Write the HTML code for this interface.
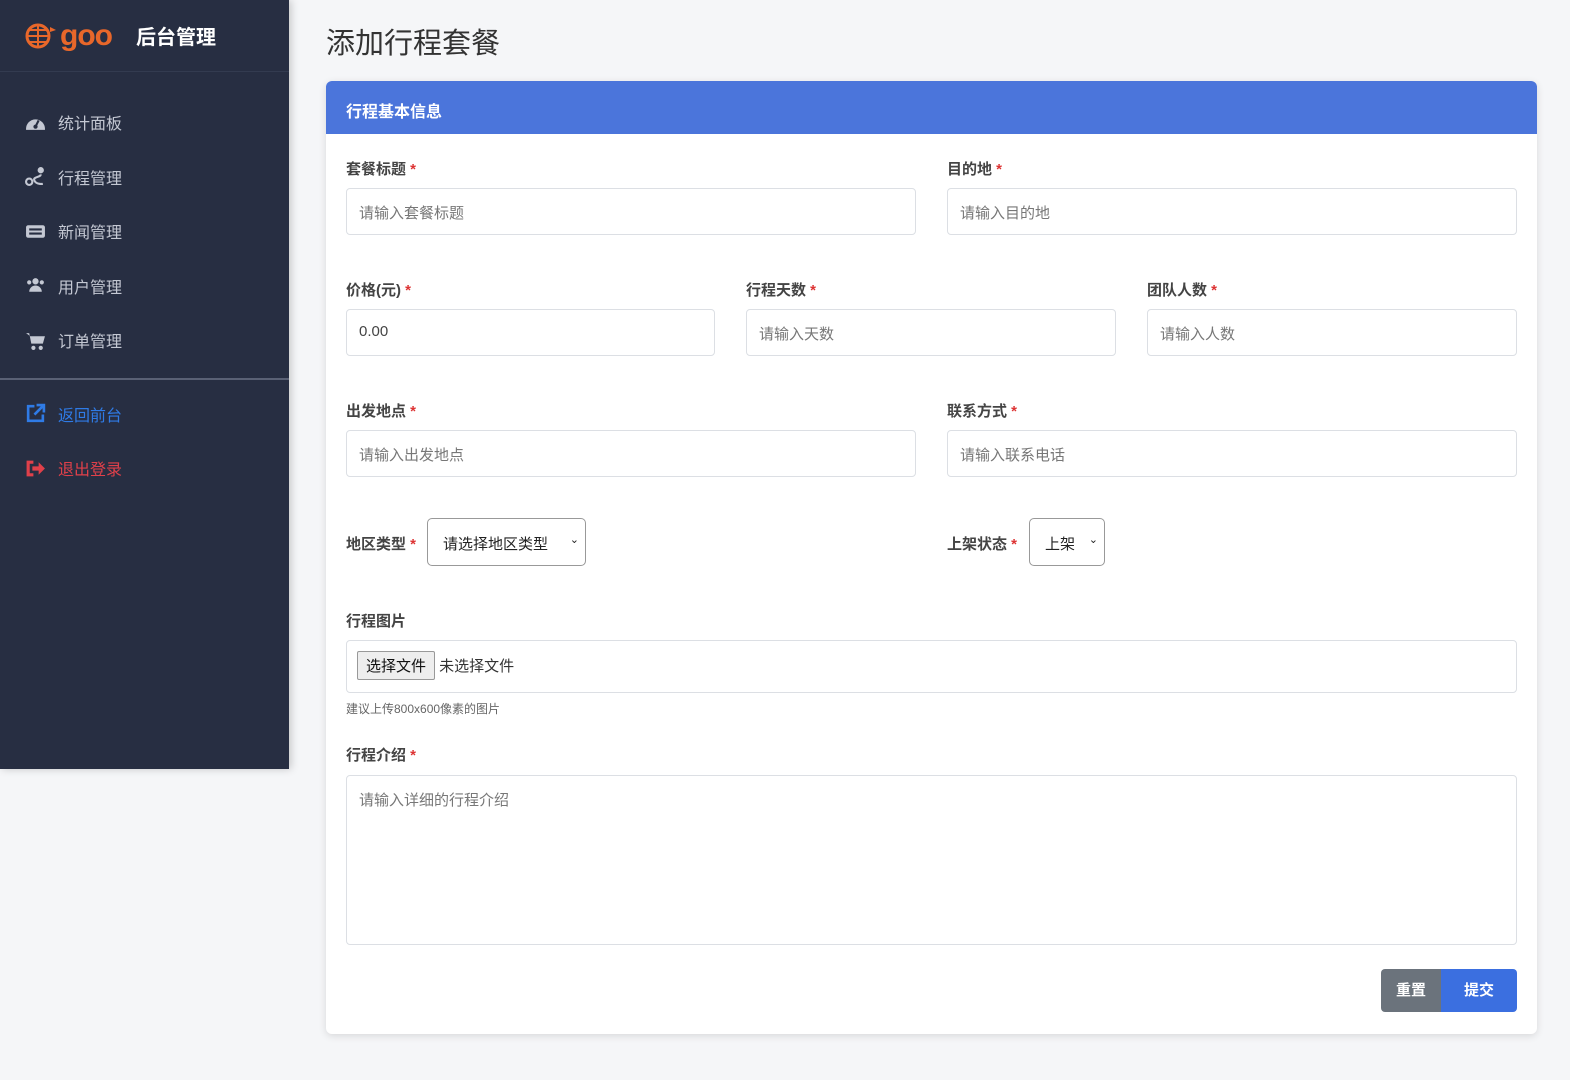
<!DOCTYPE html>
<html><head><meta charset="utf-8"><style>
*{box-sizing:border-box;margin:0;padding:0}
body{width:1570px;height:1080px;background:#f5f6f8;font-family:"Liberation Sans","Noto Sans CJK SC",sans-serif;position:relative;overflow:hidden}
.side{position:absolute;left:0;top:0;width:289px;height:769px;background:#272e42;box-shadow:2px 0 8px rgba(0,0,0,.2)}
.logo{height:72px;border-bottom:1px solid #333b50;display:flex;align-items:center;padding-left:24px}
.logo .g{color:#e8672a;font-size:30px;font-weight:bold;margin-left:2px;letter-spacing:-1px}
.logo .t{color:#fff;font-size:20px;font-weight:bold;margin-left:24px}
.nav{padding-top:23px}
.item{height:54.5px;display:flex;align-items:center;padding-left:25px;color:#c4c8d3;font-size:16px}
.item svg{width:21px;height:21px;margin-right:12px}
.sep{border-top:2px solid #5a6175;margin-top:10px;padding-top:7px}
h1{position:absolute;left:326px;top:20px;font-size:29px;font-weight:normal;color:#333}
.card{position:absolute;left:326px;top:81px;width:1211px;height:953px;background:#fff;border-radius:6px;box-shadow:0 2px 8px rgba(0,0,0,.12);overflow:hidden}
.hd{height:53px;background:#4b75db;color:#fff;font-weight:bold;font-size:16px;padding:17px 20px}
.lbl{position:absolute;font-size:15px;font-weight:bold;color:#444}
.lbl b{color:#d33;font-weight:bold}
.inp{position:absolute;height:47px;border:1px solid #dcdfe4;border-radius:4px;font-size:15px;color:#777;padding:13px 12px}
.sel{position:absolute;height:48px;border:1px solid #999;border-radius:5px;font-size:15px;color:#222;padding:14px 15px}
.btn{position:absolute;height:43px;color:#fff;font-weight:bold;font-size:15px;text-align:center;line-height:43px}
</style></head><body>
<div class="side">
<div class="logo"><svg width="34" height="30" viewBox="0 0 34 30"><circle cx="14" cy="15" r="11" fill="none" stroke="#e8672a" stroke-width="3"/><path d="M3 15h22M14 4v22M6 9h16M6 21h16" stroke="#e8672a" stroke-width="2"/><path d="M26 6l6 3-6 2" fill="#e8672a"/></svg><span class="g">goo</span><span class="t">后台管理</span></div>
<div class="nav">
<div class="item"><svg viewBox="0 0 20 20"><path d="M1 16a9 9 0 1118 0v1H1z" fill="#c4c8d3"/><path d="M10 14l3-6" stroke="#272e42" stroke-width="2"/><circle cx="10" cy="14" r="2" fill="#272e42"/></svg>统计面板</div>
<div class="item"><svg viewBox="0 0 20 20"><circle cx="4" cy="15" r="3" fill="none" stroke="#c4c8d3" stroke-width="2"/><circle cx="15" cy="4" r="3" fill="#c4c8d3"/><path d="M15 8c0 3-8 2-6 6s8 3 8 3" fill="none" stroke="#c4c8d3" stroke-width="2"/></svg>行程管理</div>
<div class="item"><svg viewBox="0 0 20 20"><rect x="1" y="4" width="18" height="12" rx="2" fill="#c4c8d3"/><path d="M4 8h12M4 12h12" stroke="#272e42" stroke-width="2"/></svg>新闻管理</div>
<div class="item"><svg viewBox="0 0 20 20"><circle cx="10" cy="6" r="3" fill="#c4c8d3"/><circle cx="4" cy="7" r="2" fill="#c4c8d3"/><circle cx="16" cy="7" r="2" fill="#c4c8d3"/><path d="M4 16a6 6 0 0112 0z" fill="#c4c8d3"/></svg>用户管理</div>
<div class="item"><svg viewBox="0 0 20 20"><path d="M1 3h3l2 10h11l2-7H5" fill="#c4c8d3"/><circle cx="8" cy="17" r="2" fill="#c4c8d3"/><circle cx="15" cy="17" r="2" fill="#c4c8d3"/></svg>订单管理</div>
<div class="sep"></div>
<div class="item" style="color:#2f7be6"><svg viewBox="0 0 20 20"><path d="M9 3H3v14h14v-6M11 2h7v7M18 2l-9 9" fill="none" stroke="#2f7be6" stroke-width="2.5"/></svg>返回前台</div>
<div class="item" style="color:#e0404a"><svg viewBox="0 0 20 20"><path d="M8 4H3v12h5" fill="none" stroke="#e0404a" stroke-width="3"/><path d="M7 8h6V4l6 6-6 6v-4H7z" fill="#e0404a"/></svg>退出登录</div>
</div></div>
<h1>添加行程套餐</h1>
<div class="card"><div class="hd">行程基本信息</div></div>
<div class="lbl" style="left:346px;top:158px">套餐标题 <b>*</b></div>
<div class="inp" style="left:346px;top:188px;width:570px">请输入套餐标题</div>
<div class="lbl" style="left:947px;top:158px">目的地 <b>*</b></div>
<div class="inp" style="left:947px;top:188px;width:570px">请输入目的地</div>
<div class="lbl" style="left:346px;top:279px">价格(元) <b>*</b></div>
<div class="inp" style="left:346px;top:309px;width:369px;color:#444">0.00</div>
<div class="lbl" style="left:746px;top:279px">行程天数 <b>*</b></div>
<div class="inp" style="left:746px;top:309px;width:370px">请输入天数</div>
<div class="lbl" style="left:1147px;top:279px">团队人数 <b>*</b></div>
<div class="inp" style="left:1147px;top:309px;width:370px">请输入人数</div>
<div class="lbl" style="left:346px;top:400px">出发地点 <b>*</b></div>
<div class="inp" style="left:346px;top:430px;width:570px">请输入出发地点</div>
<div class="lbl" style="left:947px;top:400px">联系方式 <b>*</b></div>
<div class="inp" style="left:947px;top:430px;width:570px">请输入联系电话</div>
<div class="lbl" style="left:346px;top:533px">地区类型 <b>*</b></div>
<div class="sel" style="left:427px;top:518px;width:159px">请选择地区类型 <span style="position:absolute;right:6px;font-size:11px">⌄</span></div>
<div class="lbl" style="left:947px;top:533px">上架状态 <b>*</b></div>
<div class="sel" style="left:1029px;top:518px;width:76px">上架 <span style="position:absolute;right:6px;font-size:11px">⌄</span></div>
<div class="lbl" style="left:346px;top:610px">行程图片</div>
<div class="inp" style="left:346px;top:640px;width:1171px;height:53px;padding:10px;color:#333"><span style="display:inline-block;border:1px solid #999;background:#eee;border-radius:2px;padding:3px 8px;color:#111">选择文件</span> 未选择文件</div>
<div style="position:absolute;left:346px;top:700px;font-size:12px;color:#666">建议上传800x600像素的图片</div>
<div class="lbl" style="left:346px;top:744px">行程介绍 <b>*</b></div>
<div class="inp" style="left:346px;top:775px;width:1171px;height:170px">请输入详细的行程介绍</div>
<div class="btn" style="left:1381px;width:60px;background:#6b737c;border-radius:4px 0 0 4px;top:969px">重置</div>
<div class="btn" style="left:1441px;width:76px;background:#3b6fe0;border-radius:0 4px 4px 0;top:969px">提交</div>
</body></html>
